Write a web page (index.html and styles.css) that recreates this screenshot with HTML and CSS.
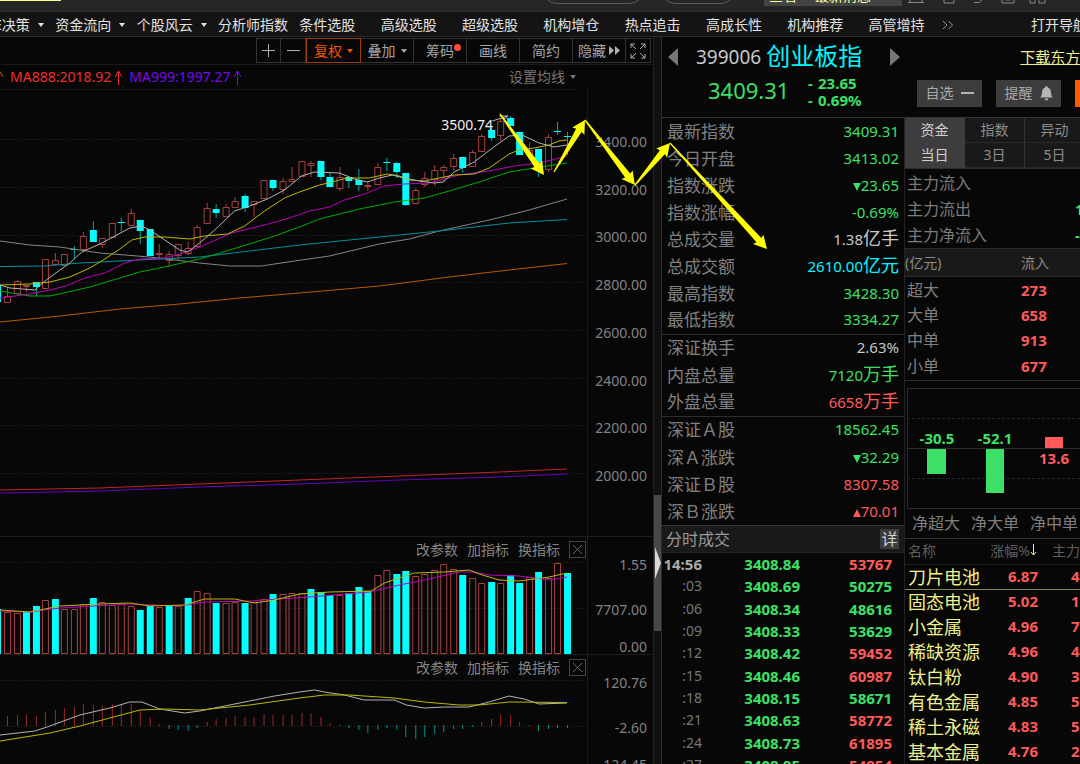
FILE: index.html
```html
<!DOCTYPE html>
<html lang="zh-CN">
<head>
<meta charset="utf-8">
<title>创业板指 399006</title>
<link rel="stylesheet" href="styles.css">
</head>
<body>
<header class="titlebar">
  <span class="title-accent"></span>
  <div class="title-tools">
    <span class="pill pill-a"></span>
    <span class="pill pill-b"></span>
    <span class="promo"><span>查看</span><span>最新消息</span></span>
    <svg class="title-icons" width="150" height="12" viewBox="0 0 150 12" aria-hidden="true">
      <path d="M0 2.500h16M2 0v2M14 0v2M36 0v3h10v-3M66 2.500h4q3 0 4-3M94 0v3h12v-3M98 0h4M122 0v3h5v-3M131 0v3h6v-3"/>
    </svg>
  </div>
</header>

<nav class="menu">
  <ul class="menu-list">
    <li><a href="#">主E决策</a><i class="caret"></i></li>
    <li><a href="#">资金流向</a><i class="caret"></i></li>
    <li><a href="#">个股风云</a><i class="caret"></i></li>
    <li><a href="#">分析师指数</a></li>
    <li><a href="#">条件选股</a></li>
    <li><a href="#">高级选股</a></li>
    <li><a href="#">超级选股</a></li>
    <li><a href="#">机构增仓</a></li>
    <li><a href="#">热点追击</a></li>
    <li><a href="#">高成长性</a></li>
    <li><a href="#">机构推荐</a></li>
    <li><a href="#">高管增持</a></li>
  </ul>
  <div class="menu-end">
    <button class="more" aria-label="更多"><svg width="12" height="10" viewBox="0 0 12 10"><path d="M1 1l4 4-4 4M6.500 1l4 4-4 4"/></svg></button>
    <a href="#">打开导航</a>
  </div>
</nav>

<main class="workspace">
  <section class="charts">
    <div class="toolbar">
      <button class="tool tool-icon" aria-label="放大"><svg width="15" height="15" viewBox="0 0 15 15"><path d="M1 7.500h13M7.500 1v13"/></svg></button>
      <button class="tool tool-icon" aria-label="缩小"><svg width="15" height="15" viewBox="0 0 15 15"><path d="M1 7.500h13"/></svg></button>
      <button class="tool tool-active">复权<i class="caret"></i></button>
      <button class="tool">叠加<i class="caret"></i></button>
      <button class="tool tool-dot">筹码</button>
      <button class="tool">画线</button>
      <button class="tool">简约</button>
      <button class="tool tool-hide">隐藏<svg width="11" height="9" viewBox="0 0 11 9"><path d="M0 0l5 4.500-5 4.500zM6 0l5 4.500-5 4.500z"/></svg></button>
      <button class="tool tool-icon" aria-label="全屏"><svg width="16" height="16" viewBox="0 0 16 16"><path d="M1 5V1h4M1 1l5 5M11 1h4v4M15 1l-5 5M1 11v4h4M1 15l5-5M15 11v4h-4M15 15l-5-5"/></svg></button>
    </div>
    <div class="ma-bar">
      <svg class="up c-orange" width="9" height="15" viewBox="0 0 9 15"><path d="M4.500 15V1M1 7l3.500-6L8 7"/></svg>
      <span class="c-ma888">MA888:2018.92</span>
      <svg class="up c-ma888" width="9" height="15" viewBox="0 0 9 15"><path d="M4.500 15V1M1 7l3.500-6L8 7"/></svg>
      <span class="c-ma999">MA999:1997.27</span>
      <svg class="up c-ma999" width="9" height="15" viewBox="0 0 9 15"><path d="M4.500 15V1M1 7l3.500-6L8 7"/></svg>
      <button class="ma-set">设置均线<i class="caret"></i></button>
    </div>

    <div class="pane pane-price">
      <div class="plot">
        <svg class="canvas" id="price" viewBox="0 90 588 446" preserveAspectRatio="none"></svg>
        <span class="peak">3500.74</span>
      </div>
      <div class="axis axis-price">
        <span>3400.00</span><span>3200.00</span><span>3000.00</span><span>2800.00</span><span>2600.00</span><span>2400.00</span><span>2200.00</span><span>2000.00</span>
      </div>
    </div>

    <div class="pane">
      <div class="plot">
        <div class="pane-head">
          <button>改参数</button><button>加指标</button><button>换指标</button>
          <button class="close" aria-label="关闭"><svg width="9" height="9" viewBox="0 0 9 9"><path d="M0 0l9 9M9 0l-9 9"/></svg></button>
        </div>
        <svg class="canvas" id="volume" viewBox="0 561 588 93" preserveAspectRatio="none"></svg>
      </div>
      <div class="axis axis-volume"><span>1.55</span><span>7707.00</span><span>0.00</span></div>
    </div>

    <div class="pane pane-macd">
      <div class="plot">
        <div class="pane-head">
          <button>改参数</button><button>加指标</button><button>换指标</button>
          <button class="close" aria-label="关闭"><svg width="9" height="9" viewBox="0 0 9 9"><path d="M0 0l9 9M9 0l-9 9"/></svg></button>
        </div>
        <svg class="canvas" id="macd" viewBox="0 679 588 85" preserveAspectRatio="none"></svg>
      </div>
      <div class="axis axis-macd"><span>120.76</span><span>-2.60</span><span>-124.45</span></div>
    </div>
  </section>

  <div class="splitter"><button class="thumb" aria-label="收起侧栏"><svg width="6" height="32" viewBox="0 0 6 32"><path d="M0 0l6 16-6 16z"/></svg></button></div>

  <section class="side">
    <div class="summary">
      <div class="summary-row">
        <button class="step" aria-label="上一只"><svg width="10" height="18" viewBox="0 0 10 18"><path d="M10 0v18L0 9z"/></svg></button>
        <span class="code">399006</span>
        <h1 class="name">创业板指</h1>
        <button class="step step-next" aria-label="下一只"><svg width="10" height="18" viewBox="0 0 10 18"><path d="M0 0v18l10-9z"/></svg></button>
        <a class="download" href="#">下载东方财富</a>
      </div>
      <div class="summary-row">
        <span class="last">3409.31</span>
        <div class="delta"><span>-</span><span>23.65</span><span>-</span><span>0.69%</span></div>
        <div class="actions">
          <button class="act">自选<svg width="13" height="12" viewBox="0 0 13 12"><path d="M0 5h13v2H0z"/></svg></button>
          <button class="act">提醒<svg width="13" height="15" viewBox="0 0 13 15"><path d="M6.500 0q1.300 0 1.300 1.600Q11 2.600 11 6.500q0 3.500 2 5H0q2-1.500 2-5 0-3.900 3.200-4.900Q5.200 0 6.500 0zM4.500 12.500h4q-.5 2-2 2t-2-2z"/></svg></button>
          <button class="act act-trade">交易</button>
        </div>
      </div>
    </div>

    <div class="columns">
      <div class="quote">
        <table class="facts">
          <tbody>
            <tr><th>最新指数</th><td class="dn">3409.31</td></tr>
            <tr><th>今日开盘</th><td class="dn">3413.02</td></tr>
            <tr><th>指数涨跌</th><td class="dn"><i class="tri-dn"></i>23.65</td></tr>
            <tr><th>指数涨幅</th><td class="dn">-0.69%</td></tr>
            <tr><th>总成交量</th><td>1.38<b>亿手</b></td></tr>
            <tr><th>总成交额</th><td class="cy">2610.00<b>亿元</b></td></tr>
            <tr><th>最高指数</th><td class="dn">3428.30</td></tr>
            <tr><th>最低指数</th><td class="dn">3334.27</td></tr>
          </tbody>
          <tbody>
            <tr><th>深证换手</th><td>2.63%</td></tr>
            <tr><th>内盘总量</th><td class="dn">7120<b>万手</b></td></tr>
            <tr><th>外盘总量</th><td class="rd">6658<b>万手</b></td></tr>
          </tbody>
          <tbody>
            <tr><th>深证Ａ股</th><td class="dn">18562.45</td></tr>
            <tr><th>深Ａ涨跌</th><td class="dn"><i class="tri-dn"></i>32.29</td></tr>
            <tr><th>深证Ｂ股</th><td class="rd">8307.58</td></tr>
            <tr><th>深Ｂ涨跌</th><td class="rd"><i class="tri-up"></i>70.01</td></tr>
          </tbody>
        </table>
        <div class="ticks-head"><span>分时成交</span><button>详</button></div>
        <table class="ticks">
          <tr class="now"><th>14:56</th><td>3408.84</td><td class="rd">53767</td></tr>
          <tr><th>:03</th><td>3408.69</td><td>50275</td></tr>
          <tr><th>:06</th><td>3408.34</td><td>48616</td></tr>
          <tr><th>:09</th><td>3408.33</td><td>53629</td></tr>
          <tr><th>:12</th><td>3408.42</td><td class="rd">59452</td></tr>
          <tr><th>:15</th><td>3408.46</td><td class="rd">60987</td></tr>
          <tr><th>:18</th><td>3408.15</td><td>58671</td></tr>
          <tr><th>:21</th><td>3408.63</td><td class="rd">58772</td></tr>
          <tr><th>:24</th><td>3408.73</td><td class="rd">61895</td></tr>
          <tr><th>:27</th><td>3408.85</td><td class="rd">54954</td></tr>
        </table>
      </div>

      <div class="flow">
        <div class="tabs">
          <button class="on">资金</button><button>指数</button><button>异动</button>
          <button class="on">当日</button><button>3日</button><button>5日</button>
        </div>
        <table class="totals">
          <tr><th>主力流入</th><td></td></tr>
          <tr><th>主力流出</th><td class="dn">115.4</td></tr>
          <tr><th>主力净流入</th><td class="dn">-82.6</td></tr>
        </table>
        <table class="sizes">
          <thead><tr><th>(亿元)</th><th>流入</th></tr></thead>
          <tbody>
            <tr><th>超大</th><td>273</td></tr>
            <tr><th>大单</th><td>658</td></tr>
            <tr><th>中单</th><td>913</td></tr>
            <tr><th>小单</th><td>677</td></tr>
          </tbody>
        </table>
        <div class="net">
          <svg class="net-plot" width="240" height="121" viewBox="0 0 240 121">
            <path class="net-frame" d="M.5.5h238v120H.5zM0 60.500h238"/>
            <path class="net-dash" d="M0 30.500h238M0 90.500h238"/>
            <path class="net-dn" d="M20 61h19v25H20zM79 61h18v44H79z"/>
            <path class="net-up" d="M138 49h18v11h-18z"/>
            <text class="t-dn" x="30" y="56">-30.5</text>
            <text class="t-dn" x="88" y="56">-52.1</text>
            <text class="t-up" x="147" y="76">13.6</text>
          </svg>
          <div class="net-labels"><span>净超大</span><span>净大单</span><span>净中单</span></div>
        </div>
        <table class="boards">
          <thead><tr><th>名称</th><th>涨幅%<svg width="7" height="12" viewBox="0 0 7 12"><path d="M3.500 0v11M1 8l2.500 3L6 8"/></svg></th><th>主力</th></tr></thead>
          <tbody>
            <tr class="picked"><th>刀片电池</th><td>6.87</td><td>4.12</td></tr>
            <tr><th>固态电池</th><td>5.02</td><td>1.35</td></tr>
            <tr><th>小金属</th><td>4.96</td><td>7.08</td></tr>
            <tr><th>稀缺资源</th><td>4.96</td><td>4.61</td></tr>
            <tr><th>钛白粉</th><td>4.90</td><td>3.27</td></tr>
            <tr><th>有色金属</th><td>4.85</td><td>5.90</td></tr>
            <tr><th>稀土永磁</th><td>4.83</td><td>5.44</td></tr>
            <tr><th>基本金属</th><td>4.76</td><td>2.18</td></tr>
          </tbody>
        </table>
      </div>
    </div>
  </section>
</main>
<svg class="marks" id="marks" width="1080" height="764" viewBox="0 0 1080 764" aria-hidden="true"></svg>
<script src="charts.js"></script>
</body>
</html>
```
FILE: styles.css
```css
* { box-sizing: border-box; }

body {
  margin: 0;
  height: 100vh;
  display: flex;
  flex-direction: column;
  overflow: hidden;
  position: relative;
  background: #070707;
  color: #c8c8c8;
  font: 14px/20px "Noto Sans", "Noto Sans CJK SC", sans-serif;
}

button {
  margin: 0;
  padding: 0;
  border: 0;
  background: none;
  color: inherit;
  font: inherit;
  white-space: nowrap;
}

a { color: inherit; text-decoration: none; white-space: nowrap; }
svg { display: block; flex: none; }
table { border-collapse: collapse; border-spacing: 0; }
th, td { padding: 0; font-weight: 400; text-align: left; white-space: nowrap; }

.caret {
  border: 3px solid transparent;
  border-top: 4px solid currentColor;
  border-bottom: 0;
}

.dn { color: #3de066; }
.rd { color: #ff5a5a; }
.cy { color: #00f6ff; }

/* title strip */
.titlebar {
  flex: none;
  height: 12px;
  display: flex;
  justify-content: space-between;
  overflow: hidden;
  background: #262626;
  border-bottom: 1px solid #2e2e2e;
}
.title-accent { width: 61px; height: 1px; background: #ffff99; }
.title-tools { display: flex; align-items: flex-start; width: 537px; }
.title-tools > * { flex: none; }
.pill { height: 28px; margin-top: -24px; border: 1px solid #5a5a5a; border-radius: 14px; }
.pill-a { width: 101px; }
.pill-b { width: 74px; margin-left: 17px; }
.promo {
  display: flex;
  gap: 18px;
  width: 138px;
  height: 20px;
  margin: -14px 6px 0 29px;
  padding-left: 5px;
  background: #444;
  color: #ffff99;
}
.title-icons { fill: none; stroke: #888; }

/* menu */
.menu {
  flex: none;
  display: flex;
  height: 25px;
  margin-left: -26px;
  background: #141414;
  border-bottom: 1px solid #2b2b2b;
  color: #e2e2e2;
  line-height: 26px;
}
.menu-list { flex: 1; display: flex; margin: 0; padding: 2px 0 0; list-style: none; }
.menu-list li { flex: 1 1 0; min-width: 0; display: flex; align-items: center; gap: 8px; }
.menu-list li:first-child a { margin-left: 6px; }
.menu-end { width: 130px; padding-top: 2px; display: flex; align-items: center; gap: 77px; }
.more { margin-left: -8px; }
.more svg { fill: none; stroke: #999; }

/* workspace */
.workspace { flex: 1; min-height: 0; display: flex; overflow: hidden; }
.charts {
  flex: 1;
  min-width: 0;
  display: grid;
  grid-template-rows: 28px 25px minmax(0, 447fr) minmax(0, 118fr) minmax(0, 109fr);
}

.toolbar {
  display: flex;
  justify-content: flex-end;
  align-items: center;
  padding-right: 2px;
  border-bottom: 1px solid #1a1a1a;
  color: #a5a5a5;
}
.tool {
  display: flex;
  align-items: center;
  justify-content: center;
  gap: 5px;
  position: relative;
  width: 53px;
  height: 25px;
  border: 1px solid #333;
  border-left-width: 0;
}
.tool-icon { width: 25px; }
.tool-icon:first-child { border-left-width: 1px; }
.tool-icon svg { fill: none; stroke: #b0b0b0; stroke-width: 1; }
.tool-active { width: 55px; border: 1px solid #a03c08; color: #f0560a; }
.tool-hide { gap: 3px; }
.tool-hide svg { fill: #b0b0b0; }
.tool-dot::after {
  content: "";
  position: absolute;
  top: 5px;
  right: 5px;
  width: 7px;
  height: 7px;
  border-radius: 50%;
  background: #ff4a3d;
}

.ma-bar {
  display: flex;
  align-items: center;
  gap: 3px;
  margin-right: 77px;
  margin-left: -5px;
  border-bottom: 1px solid #181818;
}
.up { fill: none; stroke: currentColor; margin-right: 3px; }
.c-orange { color: #c06a10; }
.c-ma888 { color: #ee2e2e; }
.c-ma999 { color: #7a08f0; }
.ma-set { display: flex; align-items: center; gap: 5px; margin-left: auto; color: #777; }

.pane { display: flex; min-height: 0; border-bottom: 1px solid #1c1c1c; }
.pane-macd { border-bottom: 0; }
.plot {
  flex: 1;
  min-width: 0;
  display: flex;
  flex-direction: column;
  position: relative;
  border-right: 1px solid #1a1a1a;
}
.canvas { flex: 1; width: 100%; min-height: 0; overflow: hidden; }
.canvas path { fill: none; vector-effect: non-scaling-stroke; }
.canvas .k-dn, .canvas .bar-dn { fill: #00ffff; }
.k-up { stroke: #a84040; }
.w-dn { stroke: #00a8a8; }
.grid { stroke: #262626; stroke-dasharray: 1 2; }
.l-white { stroke: #b4b4b4; }
.l-yellow { stroke: #bcba00; }
.l-magenta { stroke: #bc00bc; }
.l-green { stroke: #00ac00; }
.l-teal { stroke: #00909c; }
.l-gray { stroke: #858585; }
.l-orange { stroke: #b85a00; }
.l-red { stroke: #c42424; }
.l-purple { stroke: #6600c0; }
.h-up { stroke: #a02626; }
.h-dn { stroke: #009494; }
.peak {
  position: absolute;
  top: 25px;
  right: 16%;
  color: #f0f0f0;
}

.pane-head {
  flex: none;
  height: 24px;
  display: flex;
  align-items: center;
  justify-content: flex-end;
  gap: 9px;
  padding-top: 1px;
  padding-right: 1px;
  color: #858585;
}
.close {
  display: grid;
  place-items: center;
  width: 17px;
  height: 17px;
  border: 1px solid #444;
}
.close svg { stroke: #666; }

.axis {
  flex: none;
  width: 65px;
  display: flex;
  flex-direction: column;
  padding-right: 6px;
  text-align: right;
  color: #828282;
  overflow: hidden;
}
.axis-price { justify-content: space-between; padding-top: 42px; padding-bottom: 50px; }
.axis-volume, .axis-macd { gap: 25px; padding-top: 18px; }
.axis-volume span:last-child, .axis-macd span:last-child { margin-top: -8px; }

.splitter {
  flex: none;
  width: 9px;
  background: #111;
  border-left: 1px solid #222;
  border-right: 1px solid #2b2b2b;
  padding-top: 458px;
}
.thumb { display: grid; align-items: center; width: 100%; height: 136px; background: #484848; }
.thumb svg { fill: #d8d8d8; margin-left: 1px; }

/* quote side */
.side { flex: none; width: 418px; display: flex; flex-direction: column; overflow: hidden; }
.summary { flex: none; height: 81px; padding-top: 3px; border-bottom: 1px solid #333; overflow: hidden; }
.summary-row { display: flex; align-items: center; height: 33px; padding-left: 6px; white-space: nowrap; }
.summary-row > * { flex: none; }
.summary-row + .summary-row { height: 40px; padding-left: 46px; }
.step svg { fill: #777; }
.code { margin-left: 18px; font-size: 19px; }
.name { margin: 0 0 0 5px; padding-bottom: 2px; font-size: 24px; line-height: 30px; font-weight: 400; color: #00f6ff; }
.step-next { margin-left: 28px; }
.download { margin-left: 120px; font-size: 15px; color: #f0f08c; text-decoration: underline; }
.last { width: 100px; padding-bottom: 6px; font-size: 22px; color: #3de066; }
.delta {
  display: grid;
  grid-template-columns: 10px auto;
  justify-content: start;
  width: 109px;
  padding-bottom: 3px;
  font-size: 15px;
  line-height: 17px;
  font-weight: 700;
  color: #3de066;
}
.actions { display: flex; gap: 14px; }
.act {
  flex: none;
  display: flex;
  align-items: center;
  justify-content: center;
  gap: 7px;
  width: 65px;
  height: 27px;
  background: #3c3c3c;
  color: #a8a8a8;
}
.act svg { fill: #b5b5b5; }
.act-trade { background: #ff5a00; color: #fff; }

.columns { flex: 1; min-height: 0; display: flex; overflow: hidden; }
.quote { flex: none; width: 243px; border-right: 1px solid #222; }
.facts { width: 100%; }
.facts tbody + tbody { border-top: 1px solid #2e2e2e; }
.facts th { height: 27px; padding-left: 5px; font-size: 17px; color: #808080; }
.facts tbody + tbody tr:first-child th { height: 28px; }
.facts td { padding-right: 5px; padding-bottom: 2px; text-align: right; font-size: 15px; }
.facts b { font-size: 18px; font-weight: 400; }
.tri-dn, .tri-up { display: inline-block; border: 4px solid transparent; }
.tri-dn { border-top: 8px solid currentColor; border-bottom: 0; }
.tri-up { border-bottom: 8px solid currentColor; border-top: 0; }

.ticks-head {
  display: flex;
  align-items: center;
  justify-content: space-between;
  height: 28px;
  padding: 0 5px 0 4px;
  border-top: 1px solid #333;
  border-bottom: 1px solid #242424;
  background: #191919;
  color: #9a9a9a;
  font-size: 16px;
}
.ticks-head button { width: 19px; background: #3c3c3c; color: #d0d0d0; }
.ticks { width: 100%; table-layout: fixed; }
.ticks tr { height: 22px; }
.ticks tr:nth-child(3n) { height: 23px; }
.ticks th { width: 40px; text-align: right; color: #777; }
.ticks td { text-align: right; font-size: 15px; font-weight: 700; color: #3de066; }
.ticks td.rd { color: #ff5a5a; }
.ticks td:nth-child(2) { width: 98px; }
.ticks td:last-child { padding-right: 12px; }
.ticks .now th { font-size: 15px; font-weight: 700; color: #aaa; }

.flow { flex: 1; min-width: 0; overflow: hidden; }
.tabs {
  display: grid;
  grid-template-columns: repeat(3, 60px);
  border-bottom: 1px solid #2b2b2b;
  color: #8c8c8c;
}
.tabs button { height: 25px; background: #191919; border-right: 1px solid #333; border-bottom: 1px solid #2a2a2a; }
.tabs .on { background: #3d3d3d; border-color: #3d3d3d; color: #d0d0d0; }

.totals { width: 240px; margin-top: 1px; table-layout: fixed; }
.totals th { width: 170px; height: 26px; padding-left: 2px; font-size: 16px; color: #7c7c7c; }
.totals td { font-size: 15px; font-weight: 700; }

.sizes { width: 240px; table-layout: fixed; border-bottom: 1px solid #2b2b2b; }
.sizes thead { background: #191919; border-top: 1px solid #2b2b2b; border-bottom: 1px solid #2b2b2b; }
.sizes thead th { height: 28px; color: #8a8a8a; }
.sizes th:first-child { width: 116px; }
.sizes tbody th { height: 25px; padding-left: 2px; font-size: 16px; color: #808080; }
.sizes td { font-size: 15px; font-weight: 700; color: #ff5a5a; }
.sizes tbody tr:first-child th { height: 26px; }
.sizes tbody tr:last-child th { height: 28px; }

.net { padding: 7px 0 0 2px; border-bottom: 1px solid #333; }
.net-frame { fill: none; stroke: #2c2c2c; }
.net-dash { fill: none; stroke: #262626; stroke-dasharray: 3 2; }
.net-dn, .t-dn { fill: #3de066; }
.net-up, .t-up { fill: #ff5a5a; }
.net-plot text { font-size: 15px; font-weight: 700; text-anchor: middle; }
.net-labels { display: flex; gap: 11px; padding: 0 5px; font-size: 16px; line-height: 29px; color: #808080; white-space: nowrap; }

.boards { width: 240px; table-layout: fixed; }
.boards thead { border-bottom: 1px solid #1e1e1e; color: #5f5f5f; }
.boards thead th { height: 25px; }
.boards thead th:nth-child(2) { padding-right: 1px; }
.boards th:first-child { width: 80px; padding-left: 3px; }
.boards th:nth-child(2), .boards td:nth-child(2) { width: 53px; text-align: right; }
.boards th:last-child { padding-left: 14px; }
.boards thead svg { display: inline-block; fill: none; stroke: #f0f08c; }
.boards tbody th { height: 25px; font-size: 18px; color: #f0f08c; }
.boards td { padding-bottom: 2px; font-size: 15px; font-weight: 700; color: #ff5a5a; }
.boards td:last-child { padding-left: 33px; }
.boards .picked th, .boards .picked td { border-bottom: 1px solid #85854e; }

/* hand-drawn trend marks float over the whole window */
.marks { position: absolute; top: 0; left: 0; fill: #ffff00; pointer-events: none; }
```
FILE: charts.js
```js
const NS = 'http://www.w3.org/2000/svg';
const STEP = 9.5, FIRST = 7.2;
const cx = i => FIRST + STEP * i;

function add(svg, cls, d) {
  const p = document.createElementNS(NS, 'path');
  p.setAttribute('class', cls);
  p.setAttribute('d', d);
  svg.appendChild(p);
}
// Polyline through a flat x, y list.
function line(pts) {
  let d = `M${pts[0]},${pts[1]}`;
  for (let i = 2; i < pts.length; i += 2) d += `L${pts[i]},${pts[i + 1]}`;
  return d;
}

// [up?, body top, body bottom, high, low]
const candles = [
 [1,296,302,287,302],[1,281,293,280,293],[1,285,286,285,292],[0,282,287,282,296],[1,259,288,259,288],
 [1,260,264,253,264],[1,254,265,254,265],[0,249,250,246,258],[1,236,249,232,249],[0,230,242,221,242],
 [1,238,244,238,248],[1,223,237,223,237],[0,222,223,218,231],[1,213,225,209,225],[0,220,231,220,244],
 [0,229,256,229,256],[1,253,254,244,259],[1,254,260,251,267],[1,244,255,244,261],[1,248,253,242,255],
 [1,227,246,225,246],[1,208,223,203,223],[0,209,213,204,218],[1,207,216,204,216],[1,201,207,197,207],
 [0,196,208,194,212],[1,201,204,201,217],[1,180,198,180,198],[0,180,188,180,191],[1,181,189,178,194],
 [1,179,181,167,181],[1,161,176,161,176],[1,163,165,161,177],[0,161,177,161,180],[0,177,187,173,187],
 [1,177,188,167,191],[0,177,181,177,188],[0,180,185,169,191],[1,185,186,181,191],[1,167,184,163,184],
 [0,162,163,158,171],[0,163,172,162,178],[0,173,205,173,206],[1,190,203,188,203],[1,178,184,172,187],
 [1,170,179,165,186],[1,167,170,165,182],[1,158,166,154,171],[0,157,168,157,173],[1,152,166,150,166],
 [1,136,151,134,151],[0,130,138,128,141],[1,121,135,119,141],[0,118,126,116,126],[0,132,155,132,155],
 [1,150,155,142,155],[0,149,168,149,177],[1,137,169,134,172],[0,131,132,122,135],[0,136,137,132,155]];
const volume = [612,613,612,606,600,599,609,609,604,598,602,605,604,606,610,606,607,606,606,598,
 591,593,603,603,602,603,602,599,594,594,593,593,589,592,595,595,593,587,591,575,570,574,571,576,
 574,570,564,569,575,578,583,582,583,575,583,577,572,578,563,573];
const volumeDown = new Set([2,3,5,9,14,15,17,19,22,25,28,32,33,34,36,37,38,41,42,48,51,53,54,56,59]);
const macd = [716,715,715,716,712,710,708,707,704,705,706,704,704,704,710,718,724,729,730,731,728,
 722,719,718,716,717,717,714,715,715,715,713,713,717,723,726,728,730,733,730,728,730,737,739,737,
 734,732,729,729,727,722,719,715,715,722,726,731,729,728,728];

const price = document.getElementById('price');
add(price, 'grid', [139.5,187.5,235.5,282.5,330.5,378.5,425.5,473.5].map(y => `M0,${y}H588`).join(''));
let up = '', down = 'M-3,285h4v17h-4z', wick = '';
candles.forEach(([u, t, b, h, l], i) => {
  const x = Math.round(cx(i)) + .5;
  if (u) up += `M${x - 3},${t + .5}h6V${b + .5}h-6zM${x},${h}V${t}M${x},${b}V${l}`;
  else { down += `M${x - 3.5},${t}h7V${b}h-7z`; wick += `M${x},${h}V${l}`; }
});
add(price, 'k-up', up);
add(price, 'w-dn', wick);
add(price, 'k-dn', down);
const series = {
 'l-red': [0,490,100,488,200,484,300,480,400,476,500,472,568,469],
 'l-purple': [0,493,100,491,200,487,300,484,400,480,500,477,568,474],
 'l-orange': [0,322,60,316,120,309,180,304,240,298,300,293,380,286,450,277,510,270,568,263.5],
 'l-gray': [0,241,30,245,60,247,100,253,150,257,200,263,230,266,262,266,295,261,330,256,380,244,410,239,440,231,490,220,530,210,568,199],
 'l-teal': [0,266.5,45,266,80,263,140,260,200,257,250,251,300,245,370,238,440,231,510,223,568,219.5],
 'l-green': [0,291,30,296,50,296,90,287,120,278,140,272,160,268,200,259,230,250,250,244,275,236,300,227,320,219,360,209,395,202,425,198,450,191,480,182,510,172,535,168,568,163],
 'l-magenta': [0,298,30,294,50,290,66,286,85,278,105,273,125,263,140,259,165,258,180,254,200,247,232,233,265,225,290,218,310,211,330,207,345,200,365,194,385,186,405,184,430,183,460,175,490,171,515,166,540,163,568,156],
 'l-yellow': [0,285,30,284,50,282,70,277,90,268,105,259,120,249,132,240,145,237,165,237,190,239,205,236,228,234,245,226,265,211,285,198,300,192,320,185,333,182,347,178,370,178,388,174,400,176,410,180,425,181,440,178,455,175,475,174,490,168,510,154,520,150,535,148,550,145,560,141,568,140],
 'l-white': [0,285,10,288,35,290,45,281,60,270,70,263,82,252,100,244,115,236,130,228,142,226,150,230,165,240,180,250,188,252,200,243,215,230,235,211,250,206,268,199,285,190,296,181,302,176,315,172,340,173,355,179,368,182,380,178,393,175,405,178,420,181,435,183,444,182,455,172,475,162,492,149,510,136,523,135,540,143,555,147,568,145]
};
for (const k in series) add(price, k, line(series[k]));
add(price, 'l-white', 'M493,121L509,116M500,116H509L505,119');

const vol = document.getElementById('volume');
add(vol, 'grid', 'M0,562.5H588M0,608.5H588');
let vu = '', vd = 'M-5,609h6V654h-6z';
volume.forEach((t, i) => {
  const x = Math.round(cx(i)) + .5;
  if (volumeDown.has(i)) vd += `M${x - 3.5},${t}h7V654h-7z`;
  else vu += `M${x - 3},${t + .5}h6V653.5h-6z`;
});
add(vol, 'k-up', vu);
add(vol, 'bar-dn', vd);
add(vol, 'l-magenta', line([0,611,30,612,60,608,95,606,130,604,180,606,205,602,250,601,280,599,310,597,345,594,370,592,400,585,430,579,460,572,475,572,490,575,520,576,550,580,568,577]));
add(vol, 'l-yellow', line([0,610,30,612,45,609,60,606,100,604,130,603,150,606,185,605,205,599,235,599,255,603,275,600,300,594,330,592,372,591,385,583,415,573,445,572,470,570,480,574,500,580,520,581,550,577,568,573]));

const osc = document.getElementById('macd');
add(osc, 'grid', 'M0,680.5H588M0,726.5H588');
let hu = '', hd = '';
macd.forEach((y, i) => {
  const x = Math.round(cx(i)) + .5;
  if (y < 726) hu += `M${x},${y}V726`; else hd += `M${x},725V${y}`;
});
add(osc, 'h-up', hu);
add(osc, 'h-dn', hd);
add(osc, 'l-white', line([0,735,35,731,50,726,80,715,110,708,130,702,142,702,160,709,185,713,200,711,225,706,250,701,275,696,300,692,315,690,325,692,345,695,365,700,395,700,407,705,425,708,445,707,470,707,490,702,510,696,525,699,540,704,568,703]));
add(osc, 'l-yellow', line([0,741,50,733,80,726,110,718,140,710,165,709,200,710,250,705,300,698,325,695,350,695,395,698,425,702,460,705,480,705,510,702,568,702.5]));

// Tapered arrows: hairline tail, widening shaft, solid head.
const marks = document.getElementById('marks');
[[500,114,544,175],[554,172,585,120],[585,120,635,185],[635,185,670,143],[670,143,767,249]].forEach(([x1, y1, x2, y2]) => {
  const len = Math.hypot(x2 - x1, y2 - y1), ux = (x2 - x1) / len, uy = (y2 - y1) / len;
  const at = (s, o) => `${(x1 + ux * s - uy * o).toFixed(1)},${(y1 + uy * s + ux * o).toFixed(1)}`;
  const neck = len - 12;
  add(marks, 'mark', `M${at(0, -.6)}L${at(neck, -3.2)}L${at(neck - 1, -7)}L${at(len, 0)}L${at(neck - 1, 7)}L${at(neck, 3.2)}L${at(0, .6)}z`);
});
```
